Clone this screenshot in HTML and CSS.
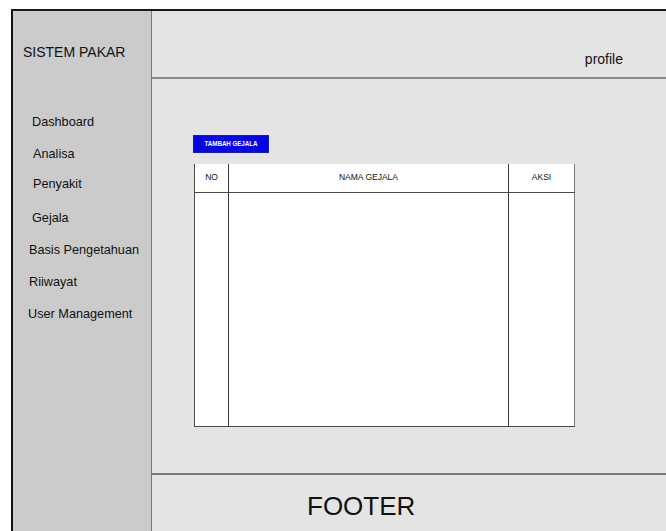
FILE: index.html
```html
<!DOCTYPE html>
<html lang="id">
<head>
<meta charset="utf-8">
<title>Sistem Pakar - Gejala</title>
<link rel="stylesheet" href="styles.css">
</head>
<body>
<div class="frame">
  <aside class="sidebar">
    <div class="brand">SISTEM PAKAR</div>
    <ul class="nav">
      <li class="nav-item">Dashboard</li>
      <li class="nav-item nav-item--in">Analisa</li>
      <li class="nav-item nav-item--in nav-item--up">Penyakit</li>
      <li class="nav-item">Gejala</li>
      <li class="nav-item nav-item--out">Basis Pengetahuan</li>
      <li class="nav-item nav-item--out">Riiwayat</li>
      <li class="nav-item nav-item--wide">User Management</li>
    </ul>
  </aside>
  <div class="page">
    <header class="topbar">
      <span class="profile">profile</span>
    </header>
    <main class="content">
      <button class="btn-add" type="button">TAMBAH GEJALA</button>
      <table class="data-table">
        <thead>
          <tr>
            <th class="col-no">NO</th>
            <th class="col-name">NAMA GEJALA</th>
            <th class="col-action">AKSI</th>
          </tr>
        </thead>
        <tbody>
          <tr>
            <td></td>
            <td></td>
            <td></td>
          </tr>
        </tbody>
      </table>
    </main>
    <footer class="footer">FOOTER</footer>
  </div>
</div>
</body>
</html>
```

FILE: styles.css
```css
* {
  box-sizing: border-box;
}

html, body {
  margin: 0;
  padding: 0;
  background: #ffffff;
}

body {
  font-family: "Liberation Sans", Arial, sans-serif;
  color: #111111;
  width: 666px;
  height: 531px;
  overflow: hidden;
}

/* outer wireframe box */
.frame {
  margin: 9px 0 0 11px;
  width: 655px;
  height: 522px;
  border-top: 2px solid #1a1a1a;
  border-left: 2px solid #111111;
  display: grid;
  grid-template-columns: 139px 1fr;
}

/* left navigation column */
.sidebar {
  background: #cbcbcb;
  border-right: 1px solid #7a7a7a;
}

.brand {
  font-size: 14px;
  line-height: 16px;
  padding: 33px 0 0 10px;
}

.nav {
  list-style: none;
  margin: 54px 0 0;
  padding: 0;
  display: flex;
  flex-direction: column;
  gap: 16px;
}

.nav-item {
  font-size: 12.7px;
  line-height: 16px;
  padding-left: 19px;
}

.nav-item--in {
  padding-left: 20px;
}

.nav-item--up {
  margin-top: -2px;
  margin-bottom: 2px;
}

.nav-item--out {
  padding-left: 16px;
}

.nav-item--wide {
  padding-left: 15px;
}

/* right column: header, content, footer */
.page {
  display: flex;
  flex-direction: column;
  background: #e4e4e4;
}

.topbar {
  height: 68px;
  border-bottom: 2px solid #8a8a8a;
  display: flex;
  justify-content: flex-end;
  align-items: flex-end;
  padding: 0 43px 10px 0;
}

.profile {
  font-size: 14px;
  line-height: 16px;
}

.content {
  flex: 1;
  padding: 56px 0 0 41px;
  display: flex;
  flex-direction: column;
  align-items: flex-start;
}

.btn-add {
  width: 76px;
  height: 18px;
  padding: 0;
  border: 1px solid #1a1aa8;
  background: #0505e8;
  color: #ffffff;
  font-family: "Liberation Sans", Arial, sans-serif;
  font-weight: bold;
  font-size: 6.3px;
  line-height: 16px;
  letter-spacing: -0.1px;
}

.data-table {
  margin: 11px 0 0 1px;
  width: 381px;
  height: 263px;
  border-collapse: collapse;
  background: #ffffff;
  border-left: 1px solid #4a4a4a;
  border-right: 1px solid #7a7a7a;
  border-bottom: 1px solid #4a4a4a;
}

.data-table th {
  height: 28px;
  font-size: 8.5px;
  font-weight: normal;
  text-align: center;
  padding: 0 0 2px;
  border-bottom: 1px solid #4a4a4a;
  vertical-align: middle;
}

.data-table th + th,
.data-table td + td {
  border-left: 1px solid #3a3a3a;
}

.data-table td {
  padding: 0;
}

.col-no {
  width: 34px;
}

.col-name {
  width: 280px;
}

.col-action {
  width: 66px;
}

.footer {
  height: 58px;
  border-top: 2px solid #7a7a7a;
  font-size: 26px;
  line-height: 30px;
  padding: 16px 0 0 155px;
}
```
